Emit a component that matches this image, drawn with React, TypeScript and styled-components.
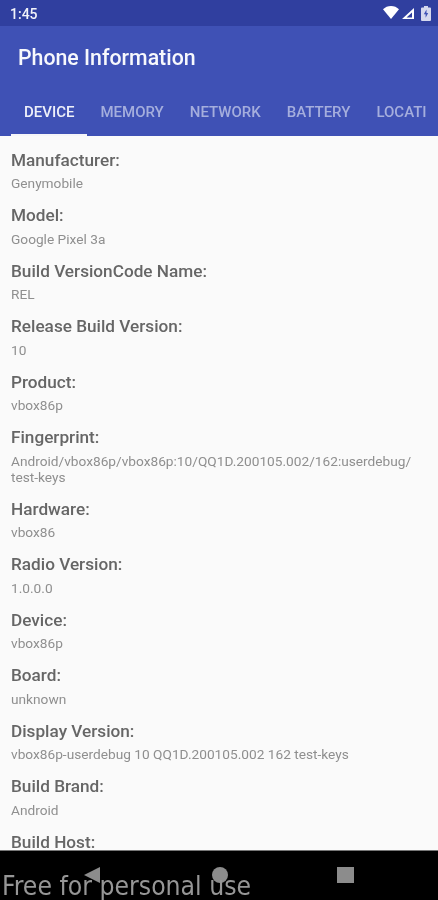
import React from 'react';
import styled, { createGlobalStyle } from 'styled-components';

const GlobalStyle = createGlobalStyle`
  html, body {
    margin: 0;
    padding: 0;
    background: #fafafa;
  }
  * {
    box-sizing: border-box;
  }
`;

const Screen = styled.div`
  width: 438px;
  height: 900px;
  display: flex;
  flex-direction: column;
  overflow: hidden;
  position: relative;
  font-family: Roboto, "Liberation Sans", sans-serif;
  filter: blur(0.45px);
`;

const StatusBar = styled.div`
  height: 26px;
  flex: none;
  background: #303f9f;
  color: #f2f3fa;
  display: flex;
  align-items: center;
  justify-content: space-between;
  padding: 0 7px 0 10px;
  font-size: 14px;
  font-weight: 500;
`;

const Clock = styled.span`
  padding-top: 2px;
`;

const StatusIcons = styled.div`
  display: flex;
  align-items: flex-start;
`;

const Glyph = styled.svg<{ $top?: number; $left?: number }>`
  display: block;
  margin-top: ${p => p.$top ?? 0}px;
  margin-left: ${p => p.$left ?? 0}px;
`;

const AppBar = styled.header`
  flex: none;
  height: 110px;
  background: #3f51b5;
  display: flex;
  flex-direction: column;
  justify-content: space-between;
`;

const Title = styled.h1`
  margin: 0;
  padding: 18px 0 0 18px;
  color: #f7f8fc;
  font-size: 21.3px;
  line-height: 28px;
  font-weight: 500;
`;

const TabRow = styled.nav`
  display: flex;
  height: 49px;
  overflow: hidden;
  margin: 0 11px;
`;

const Tab = styled.div<{ $active?: boolean }>`
  flex: none;
  padding: 15px 13px 0;
  font-size: 15px;
  line-height: 20px;
  font-weight: 500;
  color: ${p => (p.$active ? '#eef0f9' : '#a5aedd')};
  border-bottom: 2px solid ${p => (p.$active ? '#f5f5f8' : 'transparent')};
`;

const Content = styled.main`
  flex: 1;
  min-height: 0;
  overflow: hidden;
  background: #fafafa;
  padding: 9.5px 11px 0;
`;

const Item = styled.section`
  margin-bottom: 1.5px;
`;

const Label = styled.div`
  color: #666666;
  font-size: 17.2px;
  line-height: 28px;
  font-weight: 500;
`;

const Value = styled.div`
  color: #8f8f8f;
  font-size: 13.7px;
  line-height: 16px;
  padding: 1.5px 0 8.5px;
  white-space: pre-line;
`;

const NavBar = styled.footer`
  flex: none;
  height: 50.5px;
  background: #000;
  border-top: 1px solid #777;
`;

const NavSlot = styled.div<{ $x: number }>`
  position: absolute;
  left: ${p => p.$x}px;
  top: 867px;
  line-height: 0;
`;

const Watermark = styled.div`
  position: absolute;
  left: 2px;
  top: 869px;
  color: #969696;
  font-family: "DejaVu Sans Condensed", "DejaVu Sans", sans-serif;
  font-stretch: condensed;
  font-size: 26.3px;
  line-height: 34px;
  white-space: nowrap;
`;

const tabs = ['DEVICE', 'MEMORY', 'NETWORK', 'BATTERY', 'LOCATION'];

const rows = [
  ['Manufacturer:', 'Genymobile'],
  ['Model:', 'Google Pixel 3a'],
  ['Build VersionCode Name:', 'REL'],
  ['Release Build Version:', '10'],
  ['Product:', 'vbox86p'],
  ['Fingerprint:', 'Android/vbox86p/vbox86p:10/QQ1D.200105.002/162:userdebug/\ntest-keys'],
  ['Hardware:', 'vbox86'],
  ['Radio Version:', '1.0.0.0'],
  ['Device:', 'vbox86p'],
  ['Board:', 'unknown'],
  ['Display Version:', 'vbox86p-userdebug 10 QQ1D.200105.002 162 test-keys'],
  ['Build Brand:', 'Android'],
  ['Build Host:', ''],
];

const App: React.FC = () => {
  return (
    <Screen>
      <GlobalStyle />
      <StatusBar>
        <Clock>1:45</Clock>
        <StatusIcons>
          <Glyph width="16" height="13" viewBox="0 0 16 13">
            <path d="M0 3.3C2.100 1.200 4.900 0 8 0s5.900 1.200 8 3.300L8 13z" fill="#fff" />
          </Glyph>
          <Glyph width="12" height="11" viewBox="0 0 12 11" $top={2} $left={3}>
            <path d="M12 0v11H0zM10 4.500 4.500 9.500H10z" fill="#fff" fillRule="evenodd" />
          </Glyph>
          <Glyph width="10" height="15" viewBox="0 0 10 15" $left={7}>
            <path d="M3 0h4v1.500h2a1 1 0 0 1 1 1V14a1 1 0 0 1-1 1H1a1 1 0 0 1-1-1V2.500a1 1 0 0 1 1-1h2z" fill="#d5d8ee" />
            <path d="M5.500 3.500 2.800 8.300h1.800v3.400l2.600-4.800H5.500z" fill="#3f51b5" />
          </Glyph>
        </StatusIcons>
      </StatusBar>
      <AppBar>
        <Title>Phone Information</Title>
        <TabRow>
          {tabs.map((name, i) => (
            <Tab key={name} $active={i === 0}>
              {name}
            </Tab>
          ))}
        </TabRow>
      </AppBar>
      <Content>
        {rows.map(([label, value]) => (
          <Item key={label}>
            <Label>{label}</Label>
            {value && <Value>{value}</Value>}
          </Item>
        ))}
      </Content>
      <NavBar />
      <NavSlot $x={84}>
        <svg width="16" height="16" viewBox="0 0 16 16">
          <path d="M16 0v16L0 8z" fill="#8c8c8c" />
        </svg>
      </NavSlot>
      <NavSlot $x={212}>
        <svg width="16" height="16" viewBox="0 0 16 16">
          <circle cx="8" cy="8" r="8" fill="#8c8c8c" />
        </svg>
      </NavSlot>
      <NavSlot $x={337}>
        <svg width="17" height="16" viewBox="0 0 17 16">
          <rect width="17" height="16" fill="#8c8c8c" />
        </svg>
      </NavSlot>
      <Watermark>Free for personal use</Watermark>
    </Screen>
  );
};

export default App;
